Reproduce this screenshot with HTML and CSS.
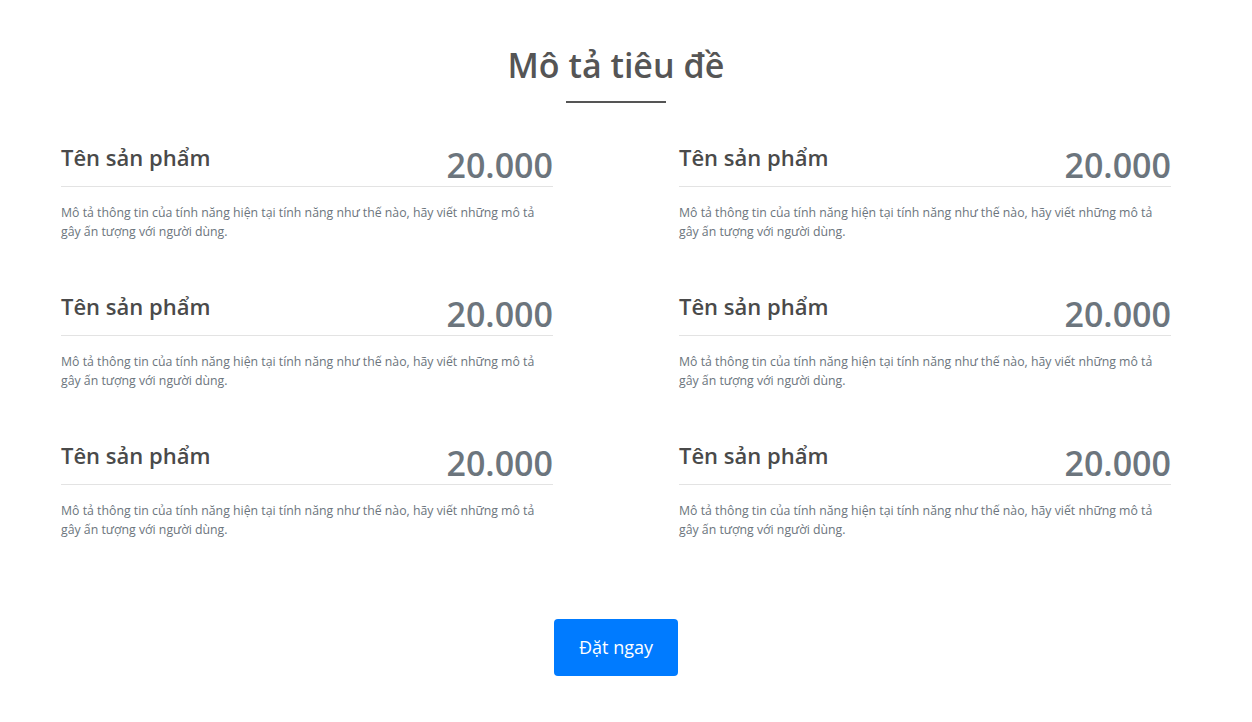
FILE: index.html
```html
<!DOCTYPE html>
<html lang="vi">
<head>
<meta charset="utf-8">
<title>Mô tả tiêu đề</title>
<link rel="stylesheet" href="styles.css">
</head>
<body>
<section class="menu">
  <h2 class="menu-title">Mô tả tiêu đề</h2>
  <div class="menu-rule"></div>
  <div class="menu-grid">
    <div class="item">
      <div class="item-head"><h3 class="item-name">Tên sản phẩm</h3><span class="item-price">20.000</span></div>
      <p class="item-desc">Mô tả thông tin của tính năng hiện tại tính năng như thế nào, hãy viết những mô tả gây ấn tượng với người dùng.</p>
    </div>
    <div class="item">
      <div class="item-head"><h3 class="item-name">Tên sản phẩm</h3><span class="item-price">20.000</span></div>
      <p class="item-desc">Mô tả thông tin của tính năng hiện tại tính năng như thế nào, hãy viết những mô tả gây ấn tượng với người dùng.</p>
    </div>
    <div class="item">
      <div class="item-head"><h3 class="item-name">Tên sản phẩm</h3><span class="item-price">20.000</span></div>
      <p class="item-desc">Mô tả thông tin của tính năng hiện tại tính năng như thế nào, hãy viết những mô tả gây ấn tượng với người dùng.</p>
    </div>
    <div class="item">
      <div class="item-head"><h3 class="item-name">Tên sản phẩm</h3><span class="item-price">20.000</span></div>
      <p class="item-desc">Mô tả thông tin của tính năng hiện tại tính năng như thế nào, hãy viết những mô tả gây ấn tượng với người dùng.</p>
    </div>
    <div class="item">
      <div class="item-head"><h3 class="item-name">Tên sản phẩm</h3><span class="item-price">20.000</span></div>
      <p class="item-desc">Mô tả thông tin của tính năng hiện tại tính năng như thế nào, hãy viết những mô tả gây ấn tượng với người dùng.</p>
    </div>
    <div class="item">
      <div class="item-head"><h3 class="item-name">Tên sản phẩm</h3><span class="item-price">20.000</span></div>
      <p class="item-desc">Mô tả thông tin của tính năng hiện tại tính năng như thế nào, hãy viết những mô tả gây ấn tượng với người dùng.</p>
    </div>
  </div>
  <div class="menu-action"><a class="btn-order" href="#">Đặt ngay</a></div>
</section>
</body>
</html>
```
FILE: styles.css
```css
* { box-sizing: border-box; }
html, body { margin: 0; padding: 0; background: #fff; }
body {
  font-family: "Open Sans", "Noto Sans", "DejaVu Sans", sans-serif;
  color: #212529;
}
.menu {
  width: 1110px;
  margin-left: 61px;
  padding-top: 45px;
  padding-bottom: 46px;
}
.menu-title {
  margin: 0;
  text-align: center;
  font-size: 34px;
  line-height: 1.2;
  font-weight: 600;
  color: #555;
}
.menu-rule {
  width: 100px;
  height: 2px;
  background: #555;
  margin: 15px auto 0;
}
.menu-grid {
  margin-top: 41px;
  display: grid;
  grid-template-columns: 492px 492px;
  column-gap: 126px;
  row-gap: 51px;
}
.item-head {
  display: flex;
  justify-content: space-between;
  align-items: flex-start;
  border-bottom: 1px solid #e3e3e3;
}
.item-name {
  margin: 0;
  font-size: 22px;
  line-height: 1.2;
  font-weight: 600;
  color: #4a4a4a;
}
.item-price {
  font-size: 34px;
  line-height: 42px;
  font-weight: 600;
  color: #6c757d;
}
.item-desc {
  margin: 0;
  padding-top: 16px;
  font-size: 12.3px;
  line-height: 19.5px;
  color: #6c757d;
}
.menu-action {
  margin-top: 79px;
  display: flex;
  justify-content: center;
}
.btn-order {
  display: inline-block;
  padding: 15px 25px;
  font-size: 18px;
  line-height: 27px;
  color: #fff;
  background: #007bff;
  border-radius: 4px;
  text-decoration: none;
}
```
